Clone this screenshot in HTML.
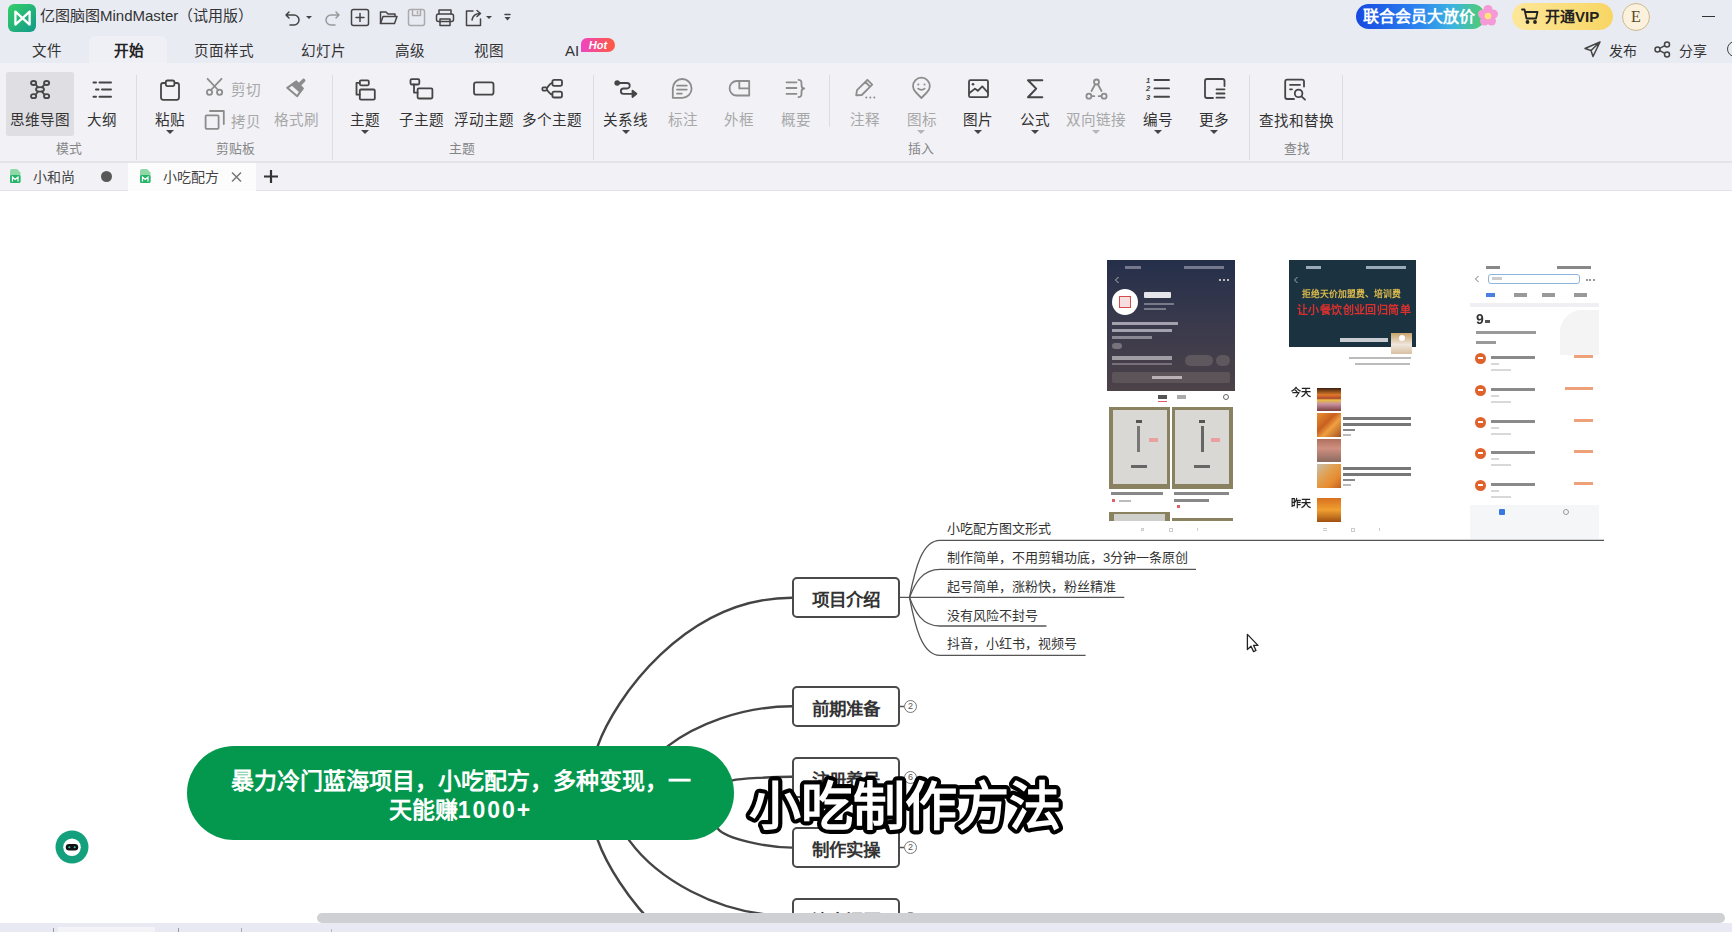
<!DOCTYPE html>
<html lang="zh-CN"><head><meta charset="utf-8">
<style>
*{box-sizing:border-box;margin:0;padding:0}
html,body{width:1732px;height:932px;overflow:hidden;background:#fff;font-family:"Liberation Sans",sans-serif;color:#333}
.a{position:absolute}
.t{position:absolute;white-space:nowrap;font-size:14.6px;line-height:20px}
svg{position:absolute;overflow:visible}
#top{left:0;top:0;width:1732px;height:63px;background:#e9ebf3}
#ribbon{left:0;top:63px;width:1732px;height:100px;background:#f1f1f6;border-bottom:2px solid #e3e3e8}
#doctabs{left:0;top:163px;width:1732px;height:28px;background:#f1f1f6}
.lbl{position:absolute;white-space:nowrap;font-size:14.6px;line-height:20px;color:#333;text-align:center}
.dis{color:#aaa}
.grp{position:absolute;white-space:nowrap;font-size:12.8px;line-height:16px;color:#858585;text-align:center}
.sep{position:absolute;width:1px;background:#dcdde3}
.caret{position:absolute;width:0;height:0;border-left:4px solid transparent;border-right:4px solid transparent;border-top:4px solid #444}
.node{position:absolute;left:792px;width:108px;height:41px;border:2px solid #4a4a4a;border-radius:5px;background:#fff;font-weight:bold;font-size:17.5px;line-height:43px;text-align:center;color:#333}
.badge{position:absolute;width:13px;height:13px;border:1px solid #777;border-radius:50%;background:#fff;font-size:9px;line-height:11px;text-align:center;color:#555}
.child{position:absolute;left:947px;font-size:13px;line-height:18px;color:#333;white-space:nowrap}
</style></head><body>
<div id="top" class="a"></div>
<div id="ribbon" class="a"></div>
<div id="doctabs" class="a"></div>
<!-- TITLE BAR -->
<svg style="left:8px;top:4px" width="28" height="28" viewBox="0 0 28 28">
<defs><linearGradient id="lg" x1="0" y1="0" x2="1" y2="1"><stop offset="0" stop-color="#36cf68"/><stop offset="1" stop-color="#11998a"/></linearGradient></defs>
<rect width="28" height="28" rx="6" fill="url(#lg)"/>
<path d="M7.4 7.6 V20.6 L21.6 7.6 V20.6 Z" fill="none" stroke="#fff" stroke-width="2.3" stroke-linejoin="round"/>
</svg>
<div class="t" style="left:40px;top:5px;font-size:15px;line-height:22px;color:#333">亿图脑图MindMaster（试用版）</div>
<!-- quick access -->
<svg style="left:284px;top:9px" width="240" height="18" viewBox="0 0 240 18" fill="none" stroke="#444" stroke-width="1.5" stroke-linecap="round" stroke-linejoin="round">
<path d="M2 6 H10 A5 5 0 0 1 10 16 H6 M2 6 L5 3 M2 6 L5 9"/>
<path d="M22 7 L28 7 L25 10 Z" fill="#444" stroke="none"/>
<g stroke="#999"><path d="M55 6 H47 A5 5 0 0 0 47 16 H51 M55 6 L52 3 M55 6 L52 9"/></g>
<rect x="67.5" y="0.5" width="17" height="16" rx="2"/><path d="M76 4.5 V12.5 M72 8.5 H80"/>
<path d="M96.5 14.5 V3 H102 L104 5 H111 V7"/><path d="M96.5 14.5 L99 7.5 H113 L110.5 14.5 Z"/>
<g stroke="#aaa"><rect x="124.5" y="0.5" width="16" height="16" rx="2"/><path d="M128.5 0.5 V6.5 H136.5 V0.5 M133.5 2.5 V4.5"/></g>
<path d="M155 5 V1 H167 V5"/><rect x="152.5" y="5" width="17" height="7.5" rx="2"/><rect x="156" y="10" width="10" height="6.5"/>
<path d="M189 2 H182.5 V16.5 H196.5 V10"/><path d="M188 11 C189 6 192 4.5 196 4.5 M193 1.5 L196.5 4.5 L193 7.5"/>
<path d="M202 7 L208 7 L205 10 Z" fill="#444" stroke="none"/>
<path d="M221 5.5 H226" /><path d="M220.5 8 L226.5 8 L223.5 11.5 Z" fill="#444" stroke="none"/>
</svg>
<!-- promo pills -->
<div class="a" style="left:1356px;top:4px;width:129px;height:25px;border-radius:13px;background:linear-gradient(90deg,#1749e0 0%,#2a7ff0 45%,#3cb4e0 75%,#4fcf6a 100%)"></div>
<div class="t" style="left:1363px;top:6px;font-size:16px;line-height:22px;color:#fff;font-weight:bold">联合会员大放价</div>
<svg style="left:1477px;top:4px" width="22" height="24" viewBox="0 0 22 24">
<g fill="#f59ad6"><circle cx="11" cy="5.5" r="4.5"/><circle cx="16.5" cy="10" r="4.5"/><circle cx="14.5" cy="17" r="4.5"/><circle cx="7.5" cy="17" r="4.5"/><circle cx="5.5" cy="10" r="4.5"/></g>
<circle cx="11" cy="12" r="3.3" fill="#ffe27a"/>
</svg>
<div class="a" style="left:1512px;top:3px;width:101px;height:27px;border-radius:14px;background:linear-gradient(90deg,#fde79a,#f8d563)"></div>
<svg style="left:1521px;top:8px" width="18" height="16" viewBox="0 0 18 16" fill="none" stroke="#222" stroke-width="1.8" stroke-linecap="round" stroke-linejoin="round">
<path d="M1 1.5 H3.5 L5.5 10.5 H15 L16.5 4 H4.5"/><circle cx="6.5" cy="14" r="1" fill="#222"/><circle cx="14" cy="14" r="1" fill="#222"/>
</svg>
<div class="t" style="left:1545px;top:6px;font-size:15px;line-height:21px;color:#222;font-weight:bold">开通VIP</div>
<div class="a" style="left:1622px;top:3px;width:28px;height:28px;border-radius:50%;background:#fbf1dc;border:1.5px solid #cdb98f"></div>
<div class="t" style="left:1622px;top:6px;width:28px;text-align:center;font-size:16px;line-height:22px;color:#5a4a2a;font-family:'Liberation Serif',serif">E</div>
<div class="a" style="left:1702px;top:16px;width:13px;height:1px;background:#333"></div>
<!-- menu tabs -->
<div class="a" style="left:89px;top:36px;width:78px;height:27px;background:#eff0f6;border-radius:6px 6px 0 0"></div>
<div class="t" style="left:32px;top:41px">文件</div>
<div class="t" style="left:114px;top:41px;font-weight:bold;color:#222">开始</div>
<div class="t" style="left:194px;top:41px">页面样式</div>
<div class="t" style="left:301px;top:41px">幻灯片</div>
<div class="t" style="left:395px;top:41px">高级</div>
<div class="t" style="left:474px;top:41px">视图</div>
<div class="t" style="left:565px;top:41px;font-size:15px">AI</div>
<div class="a" style="left:581px;top:38px;width:34px;height:14px;border-radius:6px 7px 7px 0;background:linear-gradient(90deg,#ee45c4,#ff5a3c)"></div>
<div class="t" style="left:581px;top:37px;width:34px;text-align:center;font-size:11px;line-height:16px;color:#fff;font-weight:bold;font-style:italic">Hot</div>
<svg style="left:1584px;top:41px" width="17" height="17" viewBox="0 0 17 17" fill="none" stroke="#444" stroke-width="1.5" stroke-linejoin="round" stroke-linecap="round">
<path d="M16 1 L1 7.5 L7 9.5 L9 15.5 Z M16 1 L7 9.5"/>
</svg>
<div class="t" style="left:1609px;top:41px;font-size:14px">发布</div>
<svg style="left:1654px;top:41px" width="17" height="17" viewBox="0 0 17 17" fill="none" stroke="#444" stroke-width="1.5">
<circle cx="3.5" cy="8.5" r="2.5"/><circle cx="13" cy="3.5" r="2.5"/><circle cx="13" cy="13.5" r="2.5"/><path d="M5.7 7.3 L10.8 4.7 M5.7 9.7 L10.8 12.3"/>
</svg>
<div class="t" style="left:1679px;top:41px;font-size:14px">分享</div>
<div class="a" style="left:1727px;top:41px;width:16px;height:16px;border-radius:50%;border:1.5px solid #444"></div>
<!-- RIBBON -->
<div class="a" style="left:6px;top:72px;width:68px;height:64px;background:#dedee3;border-radius:2px"></div>
<div class="sep" style="left:136px;top:75px;height:85px"></div>
<div class="sep" style="left:332px;top:75px;height:85px"></div>
<div class="sep" style="left:593px;top:75px;height:85px"></div>
<div class="sep" style="left:829px;top:75px;height:52px"></div>
<div class="sep" style="left:1249px;top:75px;height:85px"></div>
<div class="sep" style="left:1342px;top:75px;height:85px"></div>
<svg style="left:0;top:0" width="1732" height="200" viewBox="0 0 1732 200" fill="none" stroke="#454545" stroke-width="1.8" stroke-linecap="round" stroke-linejoin="round">
<!-- mind map -->
<ellipse cx="33.6" cy="83" rx="2.6" ry="2"/><ellipse cx="46.6" cy="83" rx="2.6" ry="2"/>
<ellipse cx="33.6" cy="96.2" rx="2.6" ry="2"/><ellipse cx="46.6" cy="96.2" rx="2.6" ry="2"/>
<ellipse cx="40" cy="89.4" rx="4" ry="2.2"/>
<path d="M35.8 84.6 L38 87.3 M44.4 84.6 L42 87.3 M35.8 94.6 L38 91.5 M44.4 94.6 L42 91.5"/>
<!-- outline -->
<path d="M93.5 82.5 H96 M99.5 82.5 H111 M96 89.6 H98.5 M102 89.6 H111 M93.5 96.7 H96 M99.5 96.7 H111" stroke-width="2"/>
<!-- paste -->
<rect x="161" y="83" width="18" height="16.8" rx="2.2"/><rect x="165.8" y="80.5" width="8.6" height="5.6" rx="1.8" fill="#f1f1f6"/>
<!-- cut -->
<g stroke="#8c8c8c"><circle cx="209.5" cy="92.3" r="2.6"/><circle cx="219.6" cy="92.3" r="2.6"/><path d="M211 90 L221.5 78.8 M218.1 90 L207.6 78.8"/></g>
<!-- copy -->
<g stroke="#8c8c8c"><rect x="205.6" y="115.4" width="13" height="13.4" rx="1"/><path d="M210 111 H223.8 V124"/></g>
<!-- format brush -->
<g stroke="#8c8c8c" stroke-width="2"><path d="M287.2 87.8 L296.3 81.6 L302.7 88.4 L297.2 96.2 Z"/><path d="M292 84.5 L296.3 81.6 L302.7 88.4 L300.2 91.8 Z" fill="#8c8c8c"/><path d="M299.6 84.4 L303.6 80.4" stroke-width="3.6"/></g>
<!-- topic -->
<rect x="359.8" y="80.3" width="9" height="5" rx="1.2"/><rect x="359.8" y="89.5" width="15" height="10.2" rx="1.2"/><path d="M359.8 82.8 H356.5 V94.6 H359.8"/>
<!-- subtopic -->
<rect x="410.5" y="79.1" width="8.8" height="5.4" rx="1.2"/><rect x="417.6" y="88.4" width="14.8" height="10.1" rx="1.2"/><path d="M414 84.5 V92.6 H417.6"/>
<!-- floating -->
<rect x="474" y="82.4" width="19.5" height="12.2" rx="2.2"/>
<!-- multiple -->
<rect x="542.4" y="87.3" width="4.4" height="3.3" rx="1"/><rect x="552.4" y="79.8" width="9.6" height="6" rx="1.8"/><rect x="552.4" y="91.7" width="9.6" height="5.8" rx="1.8"/>
<path d="M546.8 88.2 C549 86 549.5 83 552.4 82.8 M546.8 89.6 C549 92 549.5 94.5 552.4 94.6"/>
<!-- relationship -->
<circle cx="617.2" cy="83" r="1.9" fill="#454545"/>
<path d="M617.2 83 H627 A2.75 2.75 0 0 1 627 88.5 H623.5 A2.65 2.65 0 0 0 623.5 93.8 H633"/>
<path d="M632.5 90.6 L636.4 93.8 L632.5 97 Z" fill="#454545"/>
<!-- callout -->
<g stroke="#8c8c8c"><path d="M672.8 97.8 V88.4 A9.4 9.4 0 1 1 682.2 97.8 Z"/><path d="M677 85.6 H686.8 M677 89.6 H686.8 M677 93.6 H681.8"/></g>
<!-- boundary -->
<g stroke="#8c8c8c"><path d="M749.2 81 V95.5 H736.5 C732.5 95.5 729.6 92 729.6 88.2 C729.6 84.4 732.8 81 736.8 81 Z M739.3 81 V88.4 H749.2"/></g>
<!-- summary -->
<g stroke="#8c8c8c"><path d="M786.5 82.3 H796.5 M786.5 88 H796.5 M786.5 93.8 H796.5"/><path d="M798.5 79.8 C801.8 79.8 801.5 82 801.5 85 C801.5 87.3 802.5 88.5 804.2 88.5 C802.5 88.5 801.5 89.7 801.5 92 C801.5 95 801.8 97.2 798.5 97.2"/></g>
<!-- note -->
<g stroke="#8c8c8c"><path d="M856.2 95.3 L857 90.2 L867.4 79.8 L872.2 84.6 L861.8 95 Z M865.3 82 L870 86.7"/><g fill="#8c8c8c" stroke="none"><circle cx="866.3" cy="97.5" r="1"/><circle cx="870.3" cy="97.5" r="1"/><circle cx="874.3" cy="97.5" r="1"/></g></g>
<!-- icon -->
<g stroke="#8c8c8c"><path d="M921.4 98 L916 92.5 A8.4 8.4 0 1 1 926.8 92.5 Z"/><path d="M918.2 88.6 Q921.4 91 924.6 88.6"/><g fill="#8c8c8c" stroke="none"><circle cx="918.3" cy="84.6" r="1"/><circle cx="924.5" cy="84.6" r="1"/></g></g>
<!-- picture -->
<rect x="969" y="80.2" width="19" height="17" rx="1.5"/><circle cx="973" cy="84.3" r="1.3" fill="#454545" stroke="none"/><path d="M969.5 93 L975 88.6 L977.8 90.8 L982.3 86.4 L987.8 92.5"/>
<!-- sigma -->
<path d="M1042.3 80.2 H1028 L1036.2 88.6 L1028 97.2 H1042.3" stroke-width="2"/>
<!-- bidirectional -->
<g stroke="#8c8c8c"><circle cx="1096.5" cy="82" r="2.5"/><circle cx="1088.9" cy="96.2" r="2.5"/><circle cx="1104.1" cy="96.2" r="2.5"/><path d="M1095 84.5 L1091.5 91 M1098 84.5 L1101.5 91 M1092.3 96.2 H1094.3 M1098.7 96.2 H1100.7"/></g>
<!-- numbering -->
<path d="M1154.5 80 H1169 M1154.5 88.4 H1169 M1154.5 96.7 H1169" stroke-width="1.9"/>
<g fill="#454545" stroke="none" font-family="Liberation Sans" font-size="7.5" font-weight="bold" font-style="italic"><text x="1146" y="83">1</text><text x="1146" y="91.4">2</text><text x="1146" y="99.6">3</text></g>
<!-- more -->
<path d="M1213 98 H1207 A2 2 0 0 1 1205 96 V81 A2 2 0 0 1 1207 79 H1222.5 A2 2 0 0 1 1224.5 81 V86 M1216.5 89.3 H1224.5 M1216.5 93.5 H1224.5 M1216.5 97.7 H1224.5"/>
<!-- find -->
<path d="M1294 99 H1287.2 A2 2 0 0 1 1285.2 97 V81.6 A2 2 0 0 1 1287.2 79.6 H1302 A2 2 0 0 1 1304 81.6 V86.5 M1290 84.8 H1300 M1290 89.3 H1292"/><circle cx="1298.6" cy="93.4" r="3.8"/><path d="M1301.5 96.3 L1305 99.6"/>
</svg>
<!-- ribbon labels -->
<div class="lbl" style="left:-10px;width:100px;top:110px">思维导图</div>
<div class="lbl" style="left:52px;width:100px;top:110px">大纲</div>
<div class="lbl" style="left:120px;width:100px;top:110px">粘贴</div>
<div class="caret" style="left:166px;top:130px"></div>
<div class="t dis" style="left:231px;top:80px;color:#a8a8a8">剪切</div>
<div class="t dis" style="left:231px;top:112px;color:#a8a8a8">拷贝</div>
<div class="lbl dis" style="left:246px;width:100px;top:110px;color:#a8a8a8">格式刷</div>
<div class="grp" style="left:185px;width:100px;top:141px">剪贴板</div>
<div class="grp" style="left:19px;width:100px;top:141px">模式</div>
<div class="lbl" style="left:315px;width:100px;top:110px">主题</div>
<div class="caret" style="left:361px;top:130px"></div>
<div class="lbl" style="left:371px;width:100px;top:110px">子主题</div>
<div class="lbl" style="left:434px;width:100px;top:110px">浮动主题</div>
<div class="lbl" style="left:502px;width:100px;top:110px">多个主题</div>
<div class="grp" style="left:412px;width:100px;top:141px">主题</div>
<div class="lbl" style="left:575px;width:100px;top:110px">关系线</div>
<div class="caret" style="left:622px;top:130px"></div>
<div class="lbl dis" style="left:633px;width:100px;top:110px;color:#a8a8a8">标注</div>
<div class="lbl dis" style="left:689px;width:100px;top:110px;color:#a8a8a8">外框</div>
<div class="lbl dis" style="left:746px;width:100px;top:110px;color:#a8a8a8">概要</div>
<div class="lbl dis" style="left:815px;width:100px;top:110px;color:#a8a8a8">注释</div>
<div class="lbl dis" style="left:872px;width:100px;top:110px;color:#a8a8a8">图标</div>
<div class="caret" style="left:917px;top:130px;border-top-color:#b5b5b5"></div>
<div class="lbl" style="left:928px;width:100px;top:110px">图片</div>
<div class="caret" style="left:974px;top:130px"></div>
<div class="lbl" style="left:985px;width:100px;top:110px">公式</div>
<div class="caret" style="left:1031px;top:130px"></div>
<div class="lbl dis" style="left:1046px;width:100px;top:110px;color:#a8a8a8">双向链接</div>
<div class="caret" style="left:1092px;top:130px;border-top-color:#b5b5b5"></div>
<div class="lbl" style="left:1108px;width:100px;top:110px">编号</div>
<div class="caret" style="left:1154px;top:130px"></div>
<div class="lbl" style="left:1164px;width:100px;top:110px">更多</div>
<div class="caret" style="left:1210px;top:130px"></div>
<div class="grp" style="left:871px;width:100px;top:141px">插入</div>
<div class="lbl" style="left:1246px;width:100px;top:111px">查找和替换</div>
<div class="grp" style="left:1247px;width:100px;top:141px">查找</div>
<!-- DOC TABS -->
<div class="a" style="left:128px;top:163px;width:128px;height:28px;background:#fcfcfd"></div>
<div class="a" style="left:0;top:190px;width:128px;height:1px;background:#e3e4e9"></div>
<div class="a" style="left:256px;top:190px;width:1476px;height:1px;background:#e3e4e9"></div>
<svg style="left:9px;top:169px" width="12" height="14" viewBox="0 0 12 14">
<path d="M1 2 A2 2 0 0 1 3 0 H8 L11.5 3.5 V12 A2 2 0 0 1 9.5 14 H3 A2 2 0 0 1 1 12 Z" fill="#8fd9a8"/>
<rect x="1" y="6" width="10.5" height="8" rx="1.5" fill="#27b36a"/>
<path d="M3.5 12.5 V8 L6.2 10.5 L9 8 V12.5" fill="none" stroke="#fff" stroke-width="1.2"/>
</svg>
<div class="t" style="left:33px;top:167px;color:#444;font-size:14px">小和尚</div>
<div class="a" style="left:101px;top:171px;width:11px;height:11px;border-radius:50%;background:#585858"></div>
<svg style="left:139px;top:169px" width="12" height="14" viewBox="0 0 12 14">
<path d="M1 2 A2 2 0 0 1 3 0 H8 L11.5 3.5 V12 A2 2 0 0 1 9.5 14 H3 A2 2 0 0 1 1 12 Z" fill="#8fd9a8"/>
<rect x="1" y="6" width="10.5" height="8" rx="1.5" fill="#27b36a"/>
<path d="M3.5 12.5 V8 L6.2 10.5 L9 8 V12.5" fill="none" stroke="#fff" stroke-width="1.2"/>
</svg>
<div class="t" style="left:163px;top:167px;color:#444;font-size:14px">小吃配方</div>
<svg style="left:231px;top:172px" width="11" height="10" viewBox="0 0 11 10" stroke="#777" stroke-width="1.5" fill="none"><path d="M1 0.5 L10 9.5 M10 0.5 L1 9.5"/></svg>
<svg style="left:264px;top:170px" width="14" height="13" viewBox="0 0 14 13" stroke="#333" stroke-width="2.2" fill="none"><path d="M7 0 V13 M0 6.5 H14"/></svg>
<!-- MIND MAP -->
<svg style="left:0;top:191px" width="1732" height="722" viewBox="0 191 1732 722" fill="none">
<g stroke="#444" stroke-width="2.4">
<path d="M589.5 769 L597.7 746 C614 700.1 684.2 597.8 792 597.8"/>
<path d="M642.2 765.9 L668.1 745.9 C694 725.9 740.2 706.3 792 706.3"/>
<path d="M710 785 L732.5 780.3 C739.5 778.6 773.1 776.8 792 776.8"/>
<path d="M705 813 L717.9 828.7 C726.3 838.8 766.1 847.6 792 847.6"/>
<path d="M615 820 L629.4 840.6 C654.6 875.1 714 916 792 916"/>
<path d="M589.5 817 L597.7 840 C614 885.9 684.2 988.2 792 988.2"/>
</g>
<g stroke="#555" stroke-width="1.3">
<path d="M900 597.4 H909.5 C915 597.4 922 597.4 940 597.4 H1124.3"/>
<path d="M909.5 597.4 C915 568.9 922 540.4 940 540.4 H1604"/>
<path d="M909.5 597.4 C915 583.4 922 569.4 940 569.4 H1196"/>
<path d="M909.5 597.4 C915 611.7 922 626 940 626 H1046.4"/>
<path d="M909.5 597.4 C915 626.4 922 655.4 940 655.4 H1085.6"/>
<path d="M900 706.5 H904 M900 777.3 H904 M900 847.5 H904 M900 918.5 H904"/>
</g>
</svg>
<!-- IMAGE 1 -->
<div class="a" style="left:1107px;top:260px;width:128px;height:276px;background:#fff;overflow:hidden;filter:blur(0.5px)">
 <div class="a" style="left:0;top:0;width:128px;height:131px;background:linear-gradient(180deg,#252f4a 0%,#3a3a4c 50%,#4c4248 100%)"></div>
 <div class="a" style="left:18px;top:6px;width:16px;height:3px;background:#aab;opacity:.6"></div>
 <div class="a" style="left:77px;top:6px;width:40px;height:3px;background:#aab;opacity:.6"></div>
 <svg style="left:7px;top:16px" width="6" height="8" viewBox="0 0 6 8"><path d="M4.5 1 L1.5 4 L4.5 7" stroke="#bbb" stroke-width="1" fill="none"/></svg>
 <div class="a" style="left:112px;top:19px;width:10px;height:2px;border-top:2px dotted #bbb"></div>
 <div class="a" style="left:5px;top:29px;width:26px;height:26px;border-radius:50%;background:#fff"></div>
 <div class="a" style="left:12px;top:36px;width:12px;height:12px;border:1.5px solid #d64a4a;background:#f6dede"></div>
 <div class="a" style="left:37px;top:32px;width:27px;height:6px;background:#e6e6ea;border-radius:1px"></div>
 <div class="a" style="left:37px;top:43px;width:30px;height:2px;background:#777a88"></div>
 <div class="a" style="left:37px;top:48px;width:22px;height:2px;background:#777a88"></div>
 <div class="a" style="left:5px;top:62px;width:66px;height:3px;background:#bdbcc6;opacity:.8"></div>
 <div class="a" style="left:5px;top:69px;width:60px;height:3px;background:#bdbcc6;opacity:.8"></div>
 <div class="a" style="left:5px;top:76px;width:40px;height:3px;background:#aaa9b4;opacity:.7"></div>
 <div class="a" style="left:5px;top:83px;width:10px;height:6px;border-radius:3px;background:#77727c"></div>
 <div class="a" style="left:5px;top:96px;width:60px;height:4px;background:#c9c6cc;opacity:.7"></div>
 <div class="a" style="left:5px;top:103px;width:60px;height:2px;background:#8e8790;opacity:.7"></div>
 <div class="a" style="left:78px;top:95px;width:28px;height:11px;border-radius:6px;background:#5f575e"></div>
 <div class="a" style="left:109px;top:95px;width:14px;height:11px;border-radius:6px;background:#5f575e"></div>
 <div class="a" style="left:5px;top:112px;width:118px;height:11px;border-radius:2px;background:#5c5459"></div>
 <div class="a" style="left:45px;top:116px;width:30px;height:3px;background:#b8b2b6"></div>
 <div class="a" style="left:51px;top:135px;width:9px;height:4px;background:#555"></div>
 <div class="a" style="left:51px;top:141px;width:9px;height:1px;background:#e05a6a"></div>
 <div class="a" style="left:70px;top:135px;width:9px;height:4px;background:#aaa"></div>
 <div class="a" style="left:116px;top:134px;width:6px;height:6px;border-radius:50%;border:1.2px solid #666"></div>
 <div class="a" style="left:2px;top:147px;width:61px;height:82px;background:#8a8160;padding:3px 3px 5px 4px"><div style="width:100%;height:100%;background:#d9d8d4"></div></div>
 <div class="a" style="left:65px;top:147px;width:61px;height:82px;background:#8a8160;padding:3px 4px 5px 3px"><div style="width:100%;height:100%;background:#d9d8d4"></div></div>
 <div class="a" style="left:29px;top:160px;width:6px;height:3px;background:#555"></div><div class="a" style="left:30px;top:166px;width:3px;height:26px;background:#777"></div>
 <div class="a" style="left:92px;top:160px;width:6px;height:3px;background:#555"></div><div class="a" style="left:94px;top:166px;width:3px;height:26px;background:#666"></div>
 <div class="a" style="left:42px;top:178px;width:9px;height:4px;background:#e8a0a0"></div><div class="a" style="left:104px;top:178px;width:9px;height:4px;background:#e8a0a0"></div>
 <div class="a" style="left:24px;top:205px;width:16px;height:3px;background:#666"></div><div class="a" style="left:87px;top:205px;width:16px;height:3px;background:#666"></div>
 <div class="a" style="left:4px;top:232px;width:52px;height:3px;background:#888"></div>
 <div class="a" style="left:67px;top:232px;width:55px;height:3px;background:#888"></div><div class="a" style="left:67px;top:239px;width:35px;height:3px;background:#888"></div>
 <div class="a" style="left:5px;top:239px;width:3px;height:3px;background:#e0606a"></div><div class="a" style="left:12px;top:240px;width:12px;height:2px;background:#bbb"></div>
 <div class="a" style="left:70px;top:245px;width:3px;height:3px;background:#e0606a"></div>
 <div class="a" style="left:2px;top:252px;width:61px;height:9px;background:#8a8160;padding:2px 5px 0 5px"><div style="width:100%;height:100%;background:#cfcfcb"></div></div>
 <div class="a" style="left:65px;top:258px;width:61px;height:3px;background:#8a8160"></div>
 <div class="a" style="left:34px;top:268px;width:3px;height:3px;border:1px solid #ccc"></div><div class="a" style="left:62px;top:268px;width:4px;height:4px;border:1px solid #ccc"></div><div class="a" style="left:90px;top:268px;width:3px;height:3px;border-left:1px solid #ccc"></div>
</div>
<!-- IMAGE 2 -->
<div class="a" style="left:1289px;top:260px;width:128px;height:276px;background:#fff;overflow:hidden;filter:blur(0.4px)">
 <div class="a" style="left:0;top:0;width:127px;height:87px;background:#1b3341"></div>
 <div class="a" style="left:17px;top:6px;width:15px;height:3px;background:#9ab"></div>
 <div class="a" style="left:77px;top:6px;width:40px;height:3px;background:#9ab"></div>
 <svg style="left:4px;top:16px" width="6" height="8" viewBox="0 0 6 8"><path d="M4.5 1 L1.5 4 L4.5 7" stroke="#aab" stroke-width="1" fill="none"/></svg>
 <div class="t" style="left:13px;top:28px;font-size:8.8px;line-height:12px;color:#dbb84c;font-weight:bold;letter-spacing:0px;font-family:'Liberation Serif',serif">拒绝天价加盟费、培训费</div>
 <div class="t" style="left:8px;top:43px;font-size:11px;line-height:15px;color:#d8302e;font-weight:bold;letter-spacing:0.4px;font-family:'Liberation Serif',serif">让小餐饮创业回归简单</div>
 <div class="a" style="left:51px;top:78px;width:48px;height:4px;background:#c8ccd0"></div>
 <div class="a" style="left:102px;top:73px;width:21px;height:21px;background:linear-gradient(180deg,#c9a46a,#efe6dc 55%,#d8c0a0)"></div>
 <div class="a" style="left:110px;top:75px;width:6px;height:6px;border-radius:50%;background:#fff"></div>
 <div class="a" style="left:60px;top:97px;width:62px;height:2px;background:#bbb"></div>
 <div class="a" style="left:66px;top:103px;width:55px;height:2px;background:#bbb"></div>
 <div class="t" style="left:2px;top:126px;font-size:10px;line-height:14px;color:#222;font-weight:bold">今天</div>
 <div class="t" style="left:2px;top:237px;font-size:10px;line-height:14px;color:#222;font-weight:bold">昨天</div>
 <div class="a" style="left:28px;top:128px;width:24px;height:23px;background:linear-gradient(180deg,#3a2010 0%,#e07a28 30%,#b04830 45%,#e8c040 52%,#c890a0 70%,#7a4040 100%)"></div>
 <div class="a" style="left:28px;top:153px;width:24px;height:24px;background:linear-gradient(135deg,#e89030,#c86020 40%,#f0a040 60%,#a05020)"></div>
 <div class="a" style="left:28px;top:179px;width:24px;height:23px;background:linear-gradient(180deg,#b07060,#d09080 40%,#8a6a60 100%)"></div>
 <div class="a" style="left:28px;top:204px;width:24px;height:24px;background:linear-gradient(135deg,#c8c0b0,#e0a050 40%,#e88a30 70%,#c06020)"></div>
 <div class="a" style="left:28px;top:238px;width:24px;height:24px;background:linear-gradient(180deg,#d87020,#f0a030 50%,#a05010)"></div>
 <div class="a" style="left:54px;top:157px;width:68px;height:3px;background:#777"></div>
 <div class="a" style="left:54px;top:163px;width:68px;height:3px;background:#777"></div>
 <div class="a" style="left:54px;top:169px;width:12px;height:2px;background:#888"></div>
 <div class="a" style="left:54px;top:174px;width:8px;height:2px;background:#bbb"></div>
 <div class="a" style="left:54px;top:207px;width:68px;height:3px;background:#777"></div>
 <div class="a" style="left:54px;top:213px;width:68px;height:3px;background:#777"></div>
 <div class="a" style="left:54px;top:219px;width:12px;height:2px;background:#888"></div>
 <div class="a" style="left:54px;top:224px;width:8px;height:2px;background:#bbb"></div>
 <div class="a" style="left:34px;top:268px;width:4px;height:3px;border-top:1px solid #ccc;border-bottom:1px solid #ccc"></div><div class="a" style="left:62px;top:268px;width:4px;height:4px;border:1px solid #ccc"></div><div class="a" style="left:90px;top:268px;width:3px;height:3px;border-left:1px solid #ccc"></div>
</div>
<!-- IMAGE 3 -->
<div class="a" style="left:1470px;top:260px;width:129px;height:279px;background:#fff;overflow:hidden;filter:blur(0.6px)">
 <div class="a" style="left:16px;top:6px;width:14px;height:3px;background:#888"></div>
 <div class="a" style="left:87px;top:6px;width:34px;height:3px;background:#888"></div>
 <svg style="left:4px;top:15px" width="6" height="8" viewBox="0 0 6 8"><path d="M4.5 1 L1.5 4 L4.5 7" stroke="#777" stroke-width="1" fill="none"/></svg>
 <div class="a" style="left:18px;top:14px;width:92px;height:10px;border:1px solid #8db4dc;border-radius:3px"></div>
 <div class="a" style="left:22px;top:17px;width:10px;height:3px;background:#ccc"></div>
 <div class="a" style="left:116px;top:19px;width:9px;height:2px;border-top:2px dotted #999"></div>
 <div class="a" style="left:16px;top:33px;width:9px;height:4px;background:#4a80e0"></div>
 <div class="a" style="left:44px;top:33px;width:13px;height:4px;background:#999"></div>
 <div class="a" style="left:72px;top:33px;width:13px;height:4px;background:#999"></div>
 <div class="a" style="left:104px;top:33px;width:13px;height:4px;background:#999"></div>
 <div class="a" style="left:0;top:43px;width:129px;height:4px;background:#f0f0f2"></div>
 <div class="t" style="left:6px;top:51px;font-size:14px;line-height:16px;color:#333;font-weight:bold">9</div>
 <div class="a" style="left:15px;top:60px;width:5px;height:3px;background:#555"></div>
 <div class="a" style="left:6px;top:71px;width:60px;height:3px;background:#999"></div>
 <div class="a" style="left:6px;top:81px;width:20px;height:3px;background:#999"></div>
 <div class="a" style="left:90px;top:50px;width:50px;height:45px;border-radius:22px 0 0 0;background:#f4f4f4"></div>
 <div class="a" style="left:5px;top:93px;width:11px;height:11px;border-radius:50%;background:#e0622a"></div><div class="a" style="left:8px;top:97px;width:5px;height:2px;background:#fff"></div>
 <div class="a" style="left:5px;top:125px;width:11px;height:11px;border-radius:50%;background:#e0622a"></div><div class="a" style="left:8px;top:129px;width:5px;height:2px;background:#fff"></div>
 <div class="a" style="left:5px;top:157px;width:11px;height:11px;border-radius:50%;background:#e0622a"></div><div class="a" style="left:8px;top:161px;width:5px;height:2px;background:#fff"></div>
 <div class="a" style="left:5px;top:188px;width:11px;height:11px;border-radius:50%;background:#e0622a"></div><div class="a" style="left:8px;top:192px;width:5px;height:2px;background:#fff"></div>
 <div class="a" style="left:5px;top:220px;width:11px;height:11px;border-radius:50%;background:#e0622a"></div><div class="a" style="left:8px;top:224px;width:5px;height:2px;background:#fff"></div>
 <div class="a" style="left:21px;top:96px;width:44px;height:2.5px;background:#8a8a8a"></div><div class="a" style="left:21px;top:103px;width:8px;height:2px;background:#d8d8d8"></div><div class="a" style="left:21px;top:109px;width:20px;height:2px;background:#d8d8d8"></div>
 <div class="a" style="left:21px;top:128px;width:44px;height:2.5px;background:#8a8a8a"></div><div class="a" style="left:21px;top:135px;width:8px;height:2px;background:#d8d8d8"></div><div class="a" style="left:21px;top:141px;width:20px;height:2px;background:#d8d8d8"></div>
 <div class="a" style="left:21px;top:160px;width:44px;height:2.5px;background:#8a8a8a"></div><div class="a" style="left:21px;top:167px;width:8px;height:2px;background:#d8d8d8"></div><div class="a" style="left:21px;top:173px;width:20px;height:2px;background:#d8d8d8"></div>
 <div class="a" style="left:21px;top:191px;width:44px;height:2.5px;background:#8a8a8a"></div><div class="a" style="left:21px;top:198px;width:8px;height:2px;background:#d8d8d8"></div><div class="a" style="left:21px;top:204px;width:20px;height:2px;background:#d8d8d8"></div>
 <div class="a" style="left:21px;top:223px;width:44px;height:2.5px;background:#8a8a8a"></div><div class="a" style="left:21px;top:230px;width:8px;height:2px;background:#d8d8d8"></div><div class="a" style="left:21px;top:236px;width:20px;height:2px;background:#d8d8d8"></div>
 <div class="a" style="left:104px;top:95px;width:19px;height:3px;background:#eea07a"></div>
 <div class="a" style="left:95px;top:127px;width:28px;height:3px;background:#eea07a"></div>
 <div class="a" style="left:104px;top:159px;width:19px;height:3px;background:#eea07a"></div>
 <div class="a" style="left:104px;top:190px;width:19px;height:3px;background:#eea07a"></div>
 <div class="a" style="left:104px;top:222px;width:19px;height:3px;background:#eea07a"></div>
 <div class="a" style="left:0;top:245px;width:129px;height:35px;background:#f5f6f8"></div>
 <div class="a" style="left:29px;top:249px;width:6px;height:6px;background:#3a78e0;border-radius:1px"></div>
 <div class="a" style="left:93px;top:249px;width:6px;height:6px;border:1px solid #999;border-radius:50%"></div>
</div>
<div class="node" style="top:577px">项目介绍</div>
<div class="node" style="top:686px">前期准备</div>
<div class="node" style="top:757px">注册养号</div>
<div class="node" style="top:827px">制作实操</div>
<div class="node" style="top:898px">注意问题</div>
<div class="badge" style="left:904px;top:700px">2</div>
<div class="badge" style="left:904px;top:771px">6</div>
<div class="badge" style="left:904px;top:841px">2</div>
<div class="badge" style="left:904px;top:912px">2</div>
<div class="child" style="top:520px">小吃配方图文形式</div>
<div class="child" style="top:549px">制作简单，不用剪辑功底，3分钟一条原创</div>
<div class="child" style="top:578px">起号简单，涨粉快，粉丝精准</div>
<div class="child" style="top:607px">没有风险不封号</div>
<div class="child" style="top:635px">抖音，小红书，视频号</div>
<!-- root -->
<div class="a" style="left:187px;top:746px;width:547px;height:94px;border-radius:47px;background:#03984e"></div>
<div class="a" style="left:187px;top:767px;width:547px;text-align:center;color:#fff;font-weight:bold;font-size:23px;line-height:29px">暴力冷门蓝海项目，小吃配方，多种变现，一<br>天能赚<span style="letter-spacing:2px">1000+</span></div>
<!-- robot -->
<svg style="left:55px;top:830px" width="34" height="34" viewBox="0 0 34 34">
<circle cx="17" cy="17" r="16.5" fill="#14a07c"/>
<circle cx="17" cy="17.3" r="8.8" fill="#fff"/>
<rect x="10.8" y="14" width="12.4" height="6.6" rx="3.3" fill="#111"/>
<circle cx="14.3" cy="17.3" r="1" fill="#3cc6a0"/><circle cx="19.7" cy="17.3" r="1" fill="#3cc6a0"/>
</svg>
<!-- cursor -->
<svg style="left:1245px;top:632px" width="16" height="22" viewBox="0 0 16 22">
<path d="M2.4 2.4 V17.6 L6 14.3 L8.6 19.6 L11 18.5 L8.6 13.4 L13 13.4 Z" fill="#fff" stroke="#222" stroke-width="1.3" stroke-linejoin="round"/>
</svg>
<!-- overlay caption -->
<svg style="left:700px;top:740px" width="420" height="120" viewBox="700 740 420 120">
<text x="904.5" y="825" text-anchor="middle" font-family="Liberation Sans, sans-serif" font-size="52" font-weight="900" fill="#fff" stroke="#000" stroke-width="8.5" stroke-linejoin="round" paint-order="stroke fill" letter-spacing="0">小吃制作方法</text>
</svg>
<!-- SCROLLBAR + STATUS -->
<div class="a" style="left:0;top:923px;width:1732px;height:9px;background:#e8e9f2"></div>
<div class="a" style="left:317px;top:913px;width:1408px;height:10px;border-radius:5px;background:#cfd0d4"></div>
<div class="a" style="left:58px;top:927px;width:97px;height:5px;background:#f4f4f8"></div>
<div class="a" style="left:53px;top:928px;width:1px;height:4px;background:#999"></div><div class="a" style="left:178px;top:928px;width:1px;height:4px;background:#999"></div><div class="a" style="left:241px;top:928px;width:1px;height:4px;background:#aaa"></div><div class="a" style="left:331px;top:929px;width:1px;height:3px;background:#bbb"></div>
</body></html>
